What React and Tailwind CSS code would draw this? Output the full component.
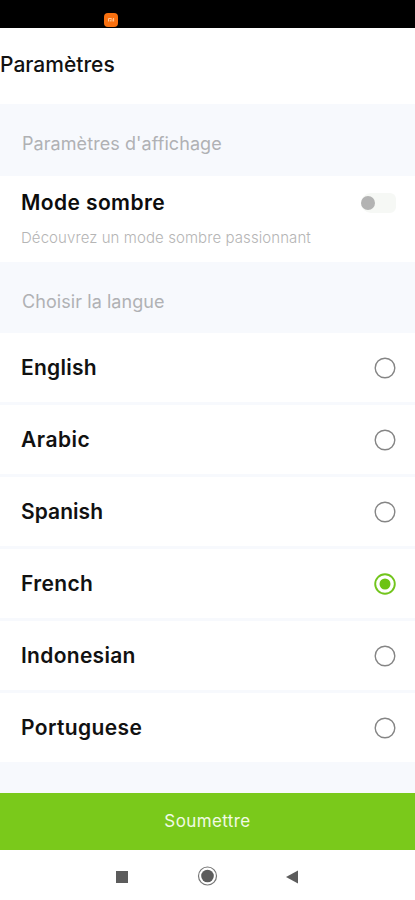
import React, { useState } from 'react'
import clsx from 'clsx'

const languages = [
  { name: 'English', tracking: 'tracking-[0.25px]' },
  { name: 'Arabic', tracking: 'tracking-[0.5px]' },
  { name: 'Spanish', tracking: 'tracking-[0.05px]' },
  { name: 'French', tracking: 'tracking-[0.35px]' },
  { name: 'Indonesian', tracking: 'tracking-[0.3px]' },
  { name: 'Portuguese', tracking: 'tracking-[0.38px]' },
]

const StatusBar = () => (
  <div className="h-7 shrink-0 bg-black pl-[104px] pt-[12.5px]">
    <div className="flex size-[14px] items-center justify-center rounded-[4px] bg-[#f9700f]">
      <svg width="8" height="6" viewBox="0 0 8 6" fill="none" stroke="#ffc795" strokeWidth="1">
        <path d="M1.5 4.5V1.5H4a1 1 0 0 1 1 1v2M3.3 2.8v1.7M6.6 1v3.5" />
      </svg>
    </div>
  </div>
)

const SectionTitle = ({ children, className }) => (
  <div className={clsx('flex shrink-0 items-center bg-[#f7f9fd] pl-[22px]', className)}>
    <h2 className="text-lg leading-6 tracking-[0.07px] text-[#b0b1b4]">{children}</h2>
  </div>
)

const Radio = ({ checked }) => (
  <svg width="22" height="22" viewBox="0 0 22 22" fill="none">
    <circle cx="11" cy="11" r="9.8" stroke={checked ? '#72c51c' : '#858585'} strokeWidth={checked ? 1.9 : 1.4} />
    {checked && <circle cx="11" cy="11" r="5.5" fill="#6cc313" />}
  </svg>
)

const App = () => {
  const [dark, setDark] = useState(false)
  const [selected, setSelected] = useState('French')

  return (
    <div className="flex h-[900px] w-full flex-col overflow-hidden bg-white font-['Inter',sans-serif]">
      <StatusBar />

      <header className="flex h-[76px] shrink-0 items-center pb-[3px]">
        <h1 className="text-[21px] font-[540] text-[#111]">Paramètres</h1>
      </header>

      <SectionTitle className="h-[72px] pt-[8px]">Paramètres d'affichage</SectionTitle>

      {/* Dark mode */}
      <div className="h-[86px] shrink-0 pl-[21px] pr-[19px] pt-[13px]">
        <div className="flex items-center justify-between">
          <h3 className="text-[21px] font-semibold leading-7 tracking-[0.4px] text-[#0c0c0c]">Mode sombre</h3>
          <button
            onClick={() => setDark(!dark)}
            className={clsx('flex h-5 w-[35px] items-center rounded-l-[10px] rounded-r-[6px] bg-[#f6f8f5]', dark && 'justify-end')}
          >
            <span className="size-[14px] rounded-full bg-[#b3b3b3]" />
          </button>
        </div>
        <p className="mt-[11px] text-[15px] font-light leading-5 tracking-[0.08px] text-[#b5b5b5]">Découvrez un mode sombre passionnant</p>
      </div>

      <SectionTitle className="h-[71px] pt-[8px]">Choisir la langue</SectionTitle>

      {/* Languages */}
      <div className="flex h-[460px] shrink-0 flex-col bg-[#f7f9fd]">
        {languages.map(({ name, tracking }) => (
          <button
            key={name}
            onClick={() => setSelected(name)}
            className="mb-[3px] flex h-[69px] shrink-0 items-center justify-between bg-white pl-[21px] pr-[19px] last:mb-0"
          >
            <span className={clsx('text-[21px] font-[560] text-[#111]', tracking)}>{name}</span>
            <Radio checked={selected === name} />
          </button>
        ))}
      </div>

      <button className="h-[57px] shrink-0 bg-[#7ac91b] text-[17px] tracking-[0.4px] text-[#f1fae4]">Soumettre</button>

      {/* Android navigation */}
      <nav className="flex flex-1 items-center justify-center pr-px pt-px">
        <svg width="190" height="22" viewBox="0 0 190 22" fill="#5c5c5c">
          <rect x="4" y="6" width="12" height="12" />
          <circle cx="95.5" cy="11" r="9" fill="none" stroke="#777" strokeWidth="1.2" />
          <circle cx="95.5" cy="11" r="6.3" />
          <path d="M174 12L186 5.500V18.500Z" />
        </svg>
      </nav>
    </div>
  )
}

export default App
